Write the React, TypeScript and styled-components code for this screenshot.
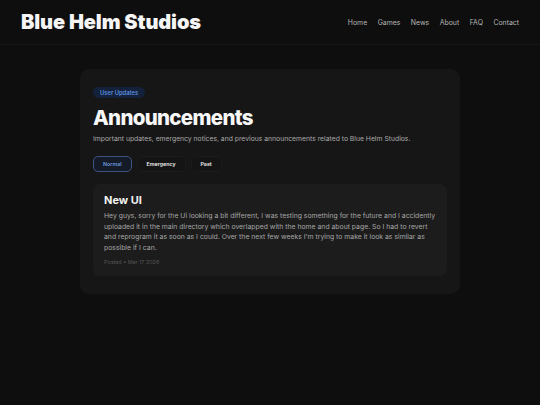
import React, { useState } from 'react';
import styled, { createGlobalStyle } from 'styled-components';

const GlobalStyle = createGlobalStyle`
  html, body {
    margin: 0;
    padding: 0;
    background: #0e0e0e;
    color: #f2f2f2;
    font-family: Inter, "Noto Sans", "Liberation Sans", sans-serif;
  }
  * {
    box-sizing: border-box;
  }
`;

const Page = styled.div`
  min-height: 405px;
  background: #0e0e0e;
`;

const Header = styled.header`
  height: 45px;
  display: flex;
  align-items: center;
  justify-content: space-between;
  padding: 0 21px;
  border-bottom: 1px solid #171717;
`;

const Brand = styled.h1`
  margin: 0;
  font-size: 20px;
  font-weight: 900;
  letter-spacing: -0.1px;
  color: #f5f5f5;
`;

const Nav = styled.nav`
  display: flex;
  gap: 10.5px;
`;

const NavLink = styled.a`
  font-size: 6.9px;
  color: #b5b5b5;
  text-decoration: none;
`;

const Main = styled.main`
  display: flex;
  justify-content: center;
  padding-top: 24px;
`;

const Card = styled.section`
  width: 380px;
  background: #161616;
  border-radius: 9px;
  padding: 18px 13px 18px;
  display: flex;
  flex-direction: column;
  align-items: flex-start;
`;

const Badge = styled.span`
  display: block;
  padding: 1.5px 7px;
  border-radius: 999px;
  background: #14213a;
  color: #5b8ddf;
  font-size: 5.8px;
  font-weight: 600;
  line-height: 8px;
`;

const Title = styled.h2`
  margin: 7px 0 0;
  font-size: 20.5px;
  font-weight: 800;
  line-height: 25px;
  letter-spacing: -0.7px;
  color: #f7f7f7;
`;

const Subtitle = styled.p`
  margin: 4px 0 0;
  font-size: 6.8px;
  line-height: 10px;
  color: #a9a9a9;
`;

const Tabs = styled.div`
  display: flex;
  gap: 5px;
  margin-top: 12px;
`;

const Tab = styled.button<{ $active?: boolean }>`
  height: 16px;
  padding: 0 9px;
  border-radius: 5px;
  font-family: inherit;
  font-size: 5.3px;
  font-weight: 600;
  cursor: pointer;
  background: ${(p) => (p.$active ? '#141a26' : '#141414')};
  border: 1px solid ${(p) => (p.$active ? '#3c5680' : '#1b1b1b')};
  color: ${(p) => (p.$active ? '#6d97dc' : '#eeeeee')};
`;

const Post = styled.article`
  align-self: stretch;
  margin-top: 12px;
  background: #1c1c1c;
  border-radius: 7px;
  padding: 9px 11px 10px;
`;

const PostTitle = styled.h3`
  margin: 0;
  font-size: 11px;
  font-weight: 700;
  line-height: 15px;
  color: #f2f2f2;
`;

const PostBody = styled.p`
  margin: 3px 0 0;
  font-size: 6.85px;
  line-height: 10.6px;
  color: #a6a6a6;
`;

const PostMeta = styled.div`
  margin-top: 5px;
  font-size: 5.4px;
  line-height: 8px;
  color: #555555;
`;

const navItems = ['Home', 'Games', 'News', 'About', 'FAQ', 'Contact'];
const tabs = ['Normal', 'Emergency', 'Past'];

export default function App() {
  const [tab, setTab] = useState('Normal');

  return (
    <Page>
      <GlobalStyle />
      <Header>
        <Brand>Blue Helm Studios</Brand>
        <Nav>
          {navItems.map((item) => (
            <NavLink key={item} href="#">
              {item}
            </NavLink>
          ))}
        </Nav>
      </Header>
      <Main>
        <Card>
          <Badge>User Updates</Badge>
          <Title>Announcements</Title>
          <Subtitle>
            Important updates, emergency notices, and previous announcements related to Blue Helm Studios.
          </Subtitle>
          <Tabs>
            {tabs.map((t) => (
              <Tab key={t} $active={tab === t} onClick={() => setTab(t)}>
                {t}
              </Tab>
            ))}
          </Tabs>
          <Post>
            <PostTitle>New UI</PostTitle>
            <PostBody>
              Hey guys, sorry for the Ui looking a bit different, I was testing something for the future and I
              accidently uploaded it in the main directory which overlapped with the home and about page. So I had
              to revert and reprogram it as soon as I could. Over the next few weeks I'm trying to make it look as
              similar as possible if I can.
            </PostBody>
            <PostMeta>Posted • Mar 17 2026</PostMeta>
          </Post>
        </Card>
      </Main>
    </Page>
  );
}
